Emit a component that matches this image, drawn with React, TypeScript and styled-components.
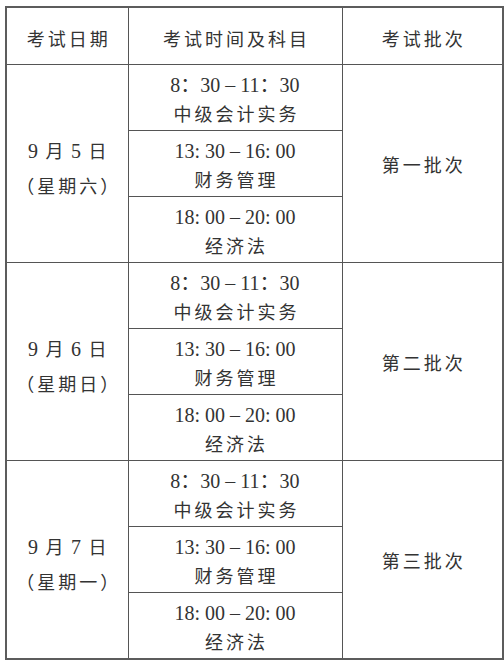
import React from 'react';
import styled, { createGlobalStyle } from 'styled-components';

const GlobalStyle = createGlobalStyle`
  body {
    margin: 0;
    background: #fff;
  }
`;

const Page = styled.div`
  padding: 6px 0 0 5px;
`;

const Table = styled.table`
  border-collapse: collapse;
  table-layout: fixed;
  width: 497px;
  border: 2px solid #5c5c5c;
  font-family: 'Liberation Serif', 'Noto Sans CJK SC', serif;
  color: #333;
  font-size: 18px;
`;

const HeadCell = styled.th`
  height: 52px;
  padding: 4px 0 0 3px;
  border: 1px solid #555;
  font-weight: 400;
  letter-spacing: 3px;
  text-align: center;
`;

const DayCell = styled.td`
  border: 1px solid #555;
  padding: 12px 0 0 0;
  text-align: center;
  line-height: 35px;
`;

const SessionCell = styled.td`
  height: 60px;
  border: 1px solid #555;
  padding: 5px 0 0 0;
  vertical-align: top;
  text-align: center;
  line-height: 30px;
`;

const BatchCell = styled.td`
  border: 1px solid #555;
  padding: 0 0 0 3px;
  text-align: center;
  letter-spacing: 3px;
`;

const Time = styled.div`
  font-size: 20px;
  white-space: pre;
`;

const Subject = styled.div`
  letter-spacing: 3px;
  padding-left: 3px;
`;

const Num = styled.span`
  font-size: 20px;
`;

const DateLine = styled.div`
  word-spacing: 3px;
`;

const Week = styled.div`
  letter-spacing: 3px;
  padding-left: 3px;
`;

const sessions = [
  { time: '8：30 – 11：30', subject: '中级会计实务' },
  { time: '13: 30 – 16: 00', subject: '财务管理' },
  { time: '18: 00 – 20: 00', subject: '经济法' },
];

const days = [
  { day: '5', week: '（星期六）', batch: '第一批次' },
  { day: '6', week: '（星期日）', batch: '第二批次' },
  { day: '7', week: '（星期一）', batch: '第三批次' },
];

export default function App() {
  return (
    <Page>
      <GlobalStyle />
      <Table>
        <colgroup>
          <col style={{ width: 122 }} />
          <col style={{ width: 214 }} />
          <col style={{ width: 161 }} />
        </colgroup>
        <thead>
          <tr>
            <HeadCell>考试日期</HeadCell>
            <HeadCell>考试时间及科目</HeadCell>
            <HeadCell>考试批次</HeadCell>
          </tr>
        </thead>
        <tbody>
          {days.map((d) =>
            sessions.map((s, i) => (
              <tr key={d.day + i}>
                {i === 0 && (
                  <DayCell rowSpan={3}>
                    <DateLine>
                      <Num>9</Num> 月 <Num>{d.day}</Num> 日
                    </DateLine>
                    <Week>{d.week}</Week>
                  </DayCell>
                )}
                <SessionCell>
                  <Time>{s.time}</Time>
                  <Subject>{s.subject}</Subject>
                </SessionCell>
                {i === 0 && <BatchCell rowSpan={3}>{d.batch}</BatchCell>}
              </tr>
            ))
          )}
        </tbody>
      </Table>
    </Page>
  );
}
